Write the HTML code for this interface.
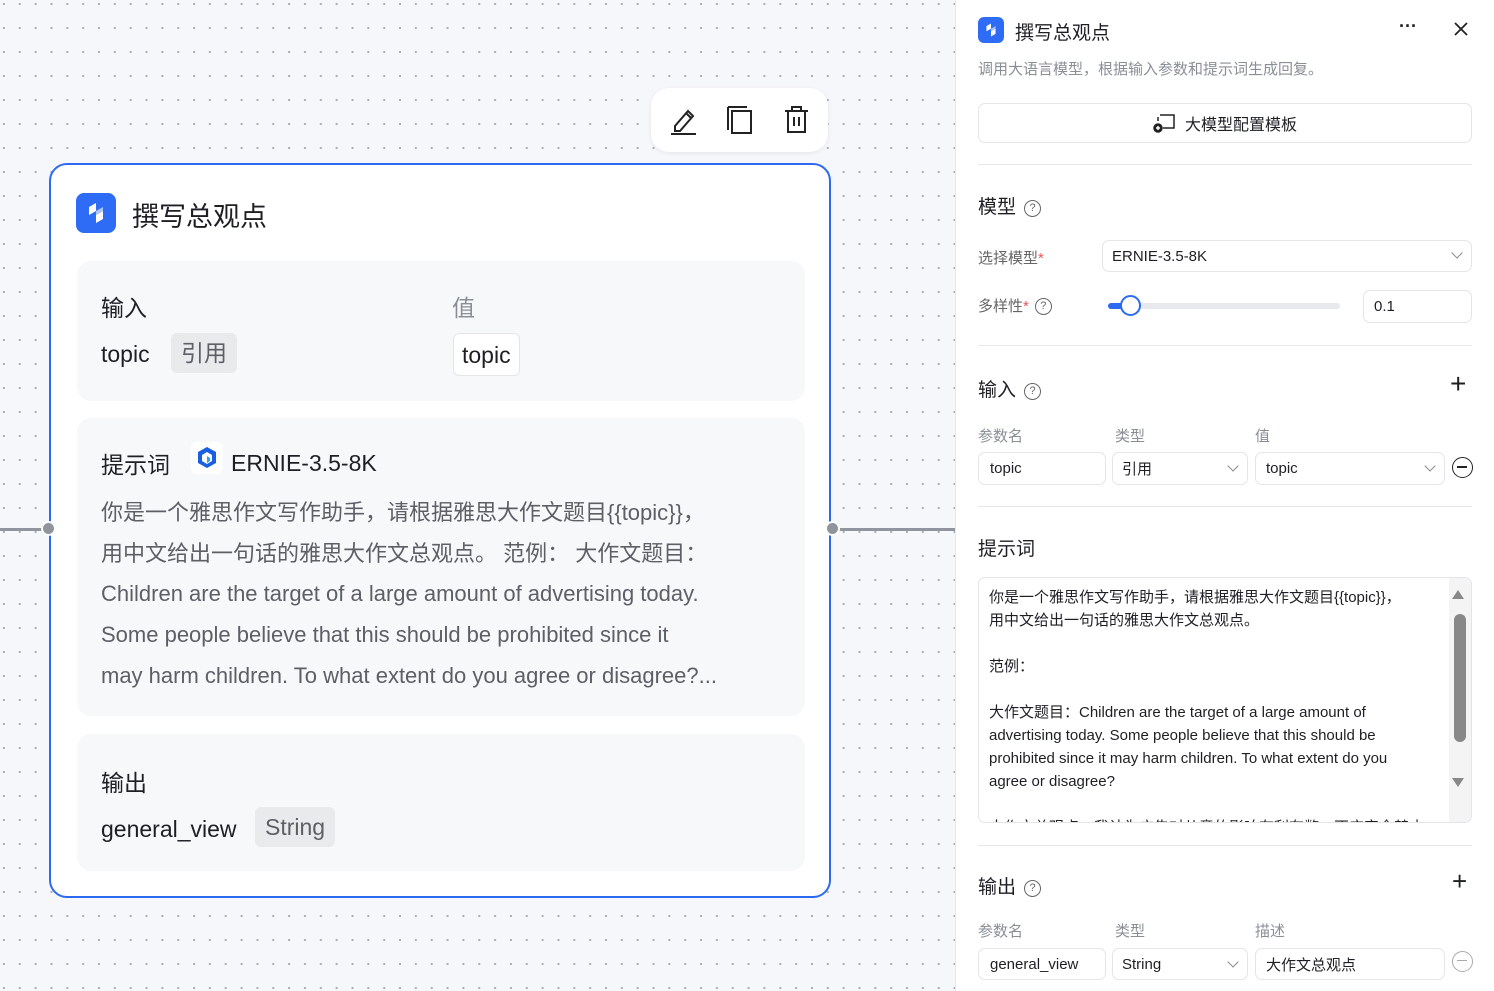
<!DOCTYPE html>
<html><head><meta charset="utf-8"><style>
*{box-sizing:border-box;margin:0;padding:0}
body{width:1494px;height:991px;overflow:hidden;position:relative;font-family:"Liberation Sans","Noto Sans CJK SC",sans-serif;color:#1d1f24;background:#f6f7fb}
.canvas{position:absolute;left:0;top:0;width:955px;height:991px;background-color:#f6f7fb;background-image:radial-gradient(circle,#a9adb8 1px,transparent 1.3px);background-size:15.85px 24px;background-position:-4px -8px}
.a{position:absolute}
.node{left:49px;top:163px;width:782px;height:735px;background:#fff;border:2.5px solid #2d6af0;border-radius:18px}
.sec{position:absolute;left:26px;width:728px;background:#f7f8fa;border-radius:14px}
.t22{font-size:23px}
.tag{background:#e9eaec;border-radius:6px;color:#5c5f66;padding:3px 10px;font-size:23px}
.panel{left:955px;top:0;width:539px;height:991px;background:#fff;border-left:1px solid #e6e8ec}
.inp{position:absolute;border:1px solid #e3e5e9;border-radius:7px;background:#fff;font-size:15px;padding-left:11px;display:flex;align-items:center}
.lbl{font-size:15px;color:#8a8e96}
.hr{position:absolute;left:22px;width:494px;height:1px;background:#e6e8ec}
.h{font-size:19px}
.q{display:inline-block;width:17px;height:17px;border:1.4px solid #666;border-radius:50%;font-size:11px;text-align:center;line-height:15px;color:#666;vertical-align:2px;margin-left:8px}
.chev{position:absolute;right:10px;top:9px;width:8px;height:8px;border-right:1.3px solid #888;border-bottom:1.3px solid #888;transform:rotate(45deg)}
.logo{background:#2e6cf6;border-radius:8px}
</style></head><body>
<div class="canvas"></div>
<div class="a" style="left:0;top:528px;width:49px;height:3px;background:#8f949d"></div>
<div class="a" style="left:831px;top:528px;width:124px;height:3px;background:#8f949d"></div>

<div class="a" style="left:651px;top:88px;width:177px;height:64px;background:#fff;border-radius:18px;box-shadow:0 1px 4px rgba(0,0,0,.08)">
<svg class="a" style="left:18px;top:16px" width="30" height="32" viewBox="0 0 30 32" fill="none" stroke="#222" stroke-width="2"><path d="M6 22 L6 27 L11 27 L24 12 L19 7 Z M17 9 L22 14"/><path d="M2 30 H27"/></svg>
<svg class="a" style="left:74px;top:16px" width="30" height="32" viewBox="0 0 30 32" fill="none" stroke="#222" stroke-width="2"><path d="M3 3 H22 M3 3 V26"/><rect x="7" y="7" width="19" height="22"/></svg>
<svg class="a" style="left:131px;top:16px" width="30" height="32" viewBox="0 0 30 32" fill="none" stroke="#222" stroke-width="2"><path d="M3 7 H26 M10 7 V3 H19 V7 M6 7 V28 H23 V7 M12 13 V22 M17 13 V22"/></svg>
</div>

<div class="a node">
 <div class="a logo" style="left:25px;top:28px;width:40px;height:40px"><svg width="40" height="40" viewBox="0 0 40 40"><path d="M13 14 L20 10 L20 18 L13 22Z M27 18 L27 26 L20 30 L20 22Z" fill="#fff"/><path d="M20 18 L27 14 V18 L20 22Z" fill="#aac4ff"/></svg></div>
 <div class="a" style="left:81px;top:30px;font-size:27px">撰写总观点</div>
 <div class="sec" style="top:96px;height:140px">
  <div class="a t22" style="left:24px;top:28px">输入</div>
  <div class="a t22" style="left:375px;top:28px;color:#8a8e96">值</div>
  <div class="a t22" style="left:24px;top:80px">topic</div>
  <div class="a tag" style="left:94px;top:72px;height:40px;line-height:34px">引用</div>
  <div class="a t22" style="left:376px;top:72px;height:43px;background:#fff;border:1px solid #e3e5e9;border-radius:6px;padding:0 8px;line-height:43px">topic</div>
 </div>
 <div class="sec" style="top:253px;height:298px">
  <div class="a t22" style="left:24px;top:28px">提示词</div>
  <div class="a" style="left:114px;top:24px;width:32px;height:32px;background:#fff;border-radius:6px"><svg width="32" height="32" viewBox="0 0 32 32"><path d="M16 5 L25 10 V21 L16 26 L7 21 V10Z" fill="#1a5fe0"/><path d="M16 10 L21 13 V19 L16 22 L11 19 V13Z" fill="#fff"/><path d="M16 14 L19 16 V19 L16 21Z" fill="#20a8f0"/></svg></div>
  <div class="a t22" style="left:154px;top:32px">ERNIE-3.5-8K</div>
  <div class="a" style="left:24px;top:75px;width:710px;font-size:22px;line-height:40.7px;color:#5c5f66;white-space:nowrap">你是一个雅思作文写作助手，请根据雅思大作文题目{{topic}}，<br>用中文给出一句话的雅思大作文总观点。 范例： 大作文题目：<br>Children are the target of a large amount of advertising today.<br>Some people believe that this should be prohibited since it<br>may harm children. To what extent do you agree or disagree?...</div>
 </div>
 <div class="sec" style="top:569px;height:137px">
  <div class="a t22" style="left:24px;top:30px">输出</div>
  <div class="a t22" style="left:24px;top:82px">general_view</div>
  <div class="a tag" style="left:178px;top:73px;height:40px;line-height:34px">String</div>
 </div>
</div>
<div class="a" style="left:41px;top:521px;width:15px;height:15px;border-radius:50%;background:#8f949d;border:2px solid #fff"></div>
<div class="a" style="left:825px;top:521px;width:15px;height:15px;border-radius:50%;background:#8f949d;border:2px solid #fff"></div>

<div class="a panel">
 <div class="a logo" style="left:22px;top:17px;width:26px;height:26px;border-radius:6px"><svg width="26" height="26" viewBox="0 0 40 40"><path d="M13 14 L20 10 L20 18 L13 22Z M27 18 L27 26 L20 30 L20 22Z" fill="#fff"/><path d="M20 18 L27 14 V18 L20 22Z" fill="#aac4ff"/></svg></div>
 <div class="a" style="left:59px;top:18px;font-size:19px">撰写总观点</div>
 <div class="a" style="left:443px;top:16px;font-size:18px;font-weight:bold;letter-spacing:0px">···</div>
 <svg class="a" style="left:497px;top:21px" width="16" height="16" stroke="#222" stroke-width="1.8"><path d="M2 2L14 14M14 2L2 14"/></svg>
 <div class="a" style="left:22px;top:58px;font-size:15px;color:#8a8e96">调用大语言模型，根据输入参数和提示词生成回复。</div>
 <div class="inp" style="left:22px;top:103px;width:494px;height:40px;justify-content:center;padding:0;font-size:16px"><svg width="24" height="20" viewBox="0 0 24 20" fill="none" stroke="#222" stroke-width="1.5" style="margin-right:8px"><path d="M7 2 H21 V15 H10 M5 8 V4"/><circle cx="5" cy="15" r="4" fill="#222"/><path d="M3 15 H7 M5 13 V17" stroke="#fff"/></svg>大模型配置模板</div>
 <div class="hr" style="top:164px"></div>
 <div class="a h" style="left:22px;top:192px">模型<span class="q">?</span></div>
 <div class="a lbl" style="left:22px;top:247px;color:#666">选择模型<span style="color:#e55">*</span></div>
 <div class="inp" style="left:146px;top:240px;width:370px;height:32px;padding-left:9px">ERNIE-3.5-8K<span class="chev" style="top:8px"></span></div>
 <div class="a lbl" style="left:22px;top:295px;color:#666">多样性<span style="color:#e55">*</span><span class="q" style="margin-left:6px">?</span></div>
 <div class="a" style="left:152px;top:303px;width:232px;height:6px;background:#e8e9ec;border-radius:3px"></div>
 <div class="a" style="left:152px;top:303px;width:20px;height:6px;background:#2d6af0;border-radius:3px"></div>
 <div class="a" style="left:164px;top:295px;width:21px;height:21px;border-radius:50%;background:#fff;border:2px solid #2d6af0"></div>
 <div class="inp" style="left:407px;top:290px;width:109px;height:33px;padding-left:10px">0.1</div>
 <div class="hr" style="top:345px"></div>
 <div class="a h" style="left:22px;top:375px">输入<span class="q">?</span></div>
 <div class="a" style="left:494px;top:368px;font-size:28px;font-weight:300">+</div>
 <div class="a lbl" style="left:22px;top:425px">参数名</div>
 <div class="a lbl" style="left:159px;top:425px">类型</div>
 <div class="a lbl" style="left:299px;top:425px">值</div>
 <div class="inp" style="left:22px;top:452px;width:128px;height:33px">topic</div>
 <div class="inp" style="left:156px;top:452px;width:136px;height:33px;padding-left:9px">引用<span class="chev"></span></div>
 <div class="inp" style="left:299px;top:452px;width:190px;height:33px;padding-left:10px">topic<span class="chev"></span></div>
 <div class="a" style="left:496px;top:457px;width:21px;height:21px;border:1.6px solid #222;border-radius:50%"><div class="a" style="left:4px;top:8px;width:10px;height:1.6px;background:#222"></div></div>
 <div class="hr" style="top:506px"></div>
 <div class="a h" style="left:22px;top:534px">提示词</div>
 <div class="a" style="left:22px;top:577px;width:494px;height:246px;border:1px solid #e3e5e9;border-radius:7px;overflow:hidden">
  <div class="a" style="left:10px;top:8px;width:450px;font-size:15px;line-height:23px;white-space:nowrap">你是一个雅思作文写作助手，请根据雅思大作文题目{{topic}}，<br>用中文给出一句话的雅思大作文总观点。<br><br>范例：<br><br>大作文题目：Children are the target of a large amount of<br>advertising today. Some people believe that this should be<br>prohibited since it may harm children. To what extent do you<br>agree or disagree?<br><br>大作文总观点：我认为广告对儿童的影响有利有弊，不应完全禁止</div>
  <div class="a" style="right:0;top:0;width:22px;height:245px;background:#f4f4f4"></div>
  <div class="a" style="right:7px;top:12px;width:0;height:0;border-left:6px solid transparent;border-right:6px solid transparent;border-bottom:9px solid #888"></div>
  <div class="a" style="right:5px;top:36px;width:12px;height:128px;border-radius:6px;background:#888"></div>
  <div class="a" style="right:7px;top:200px;width:0;height:0;border-left:6px solid transparent;border-right:6px solid transparent;border-top:9px solid #888"></div>
 </div>
 <div class="hr" style="top:845px"></div>
 <div class="a h" style="left:22px;top:872px">输出<span class="q">?</span></div>
 <div class="a" style="left:496px;top:866px;font-size:26px;font-weight:300">+</div>
 <div class="a lbl" style="left:22px;top:920px">参数名</div>
 <div class="a lbl" style="left:159px;top:920px">类型</div>
 <div class="a lbl" style="left:299px;top:920px">描述</div>
 <div class="inp" style="left:22px;top:948px;width:128px;height:32px">general_view</div>
 <div class="inp" style="left:156px;top:948px;width:136px;height:32px;padding-left:9px">String<span class="chev"></span></div>
 <div class="inp" style="left:299px;top:948px;width:190px;height:32px;padding-left:10px">大作文总观点</div>
 <div class="a" style="left:496px;top:951px;width:21px;height:21px;border:1.4px solid #aaa;border-radius:50%"><div class="a" style="left:4px;top:8px;width:10px;height:1.4px;background:#aaa"></div></div>
</div>
</body></html>
